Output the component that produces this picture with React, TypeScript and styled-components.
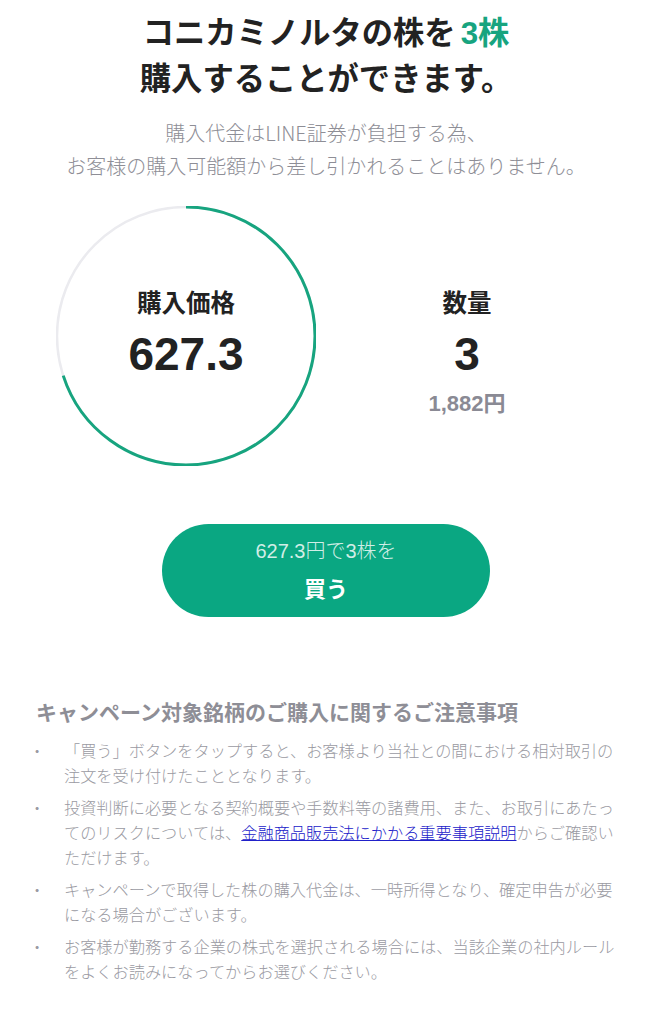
import React from 'react'
import styled, { createGlobalStyle } from 'styled-components'

const GlobalStyle = createGlobalStyle`
  * { box-sizing: border-box; }
  body {
    margin: 0;
    background: #ffffff;
    font-family: "Liberation Sans", "Noto Sans CJK JP", sans-serif;
    color: #222222;
  }
`

const colors = {
  text: '#222222',
  gray: '#8e8e96',
  lightGray: '#9a9aa2',
  green: '#17a47f',
  button: '#0aa782',
  track: '#ebebef',
  link: '#2121c9',
}

const Page = styled.div`
  width: 652px;
  padding: 11px 0 40px;
`

const Title = styled.h1`
  margin: 0;
  text-align: center;
  font-size: 31.3px;
  line-height: 46px;
  font-weight: 700;
  color: ${colors.text};
`

const Accent = styled.span`
  color: ${colors.green};
  margin-left: 5px;
`

const Lead = styled.p`
  margin: 13px 0 0;
  text-align: center;
  font-size: 20px;
  line-height: 33px;
  color: ${colors.gray};
  font-family: "Noto Sans CJK JP", sans-serif;
  font-weight: 300;
`

const StatsRow = styled.div`
  display: flex;
  align-items: flex-start;
  margin-top: 24px;
  padding-left: 56px;
`

const Ring = styled.div`
  position: relative;
  width: 260px;
  height: 260px;
  display: flex;
  flex-direction: column;
  align-items: center;
  padding-top: 82px;
`

const RingSvg = styled.svg`
  position: absolute;
  inset: 0;
`

const StatColumn = styled.div`
  width: 120px;
  margin-left: 91px;
  display: flex;
  flex-direction: column;
  align-items: center;
  padding-top: 82px;
`

const StatLabel = styled.div`
  position: relative;
  font-size: 24.5px;
  line-height: 32px;
  font-weight: 700;
  color: ${colors.text};
`

const StatValue = styled.div`
  position: relative;
  margin-top: 6px;
  font-size: 46px;
  line-height: 56px;
  font-weight: 700;
  color: ${colors.text};
`

const StatSub = styled.div`
  margin-top: 8px;
  font-size: 22px;
  line-height: 28px;
  font-weight: 700;
  color: #8a8a94;
`

const BuyButton = styled.button`
  display: flex;
  flex-direction: column;
  align-items: center;
  justify-content: center;
  width: 328px;
  height: 93px;
  margin: 58px auto 0;
  border: none;
  border-radius: 47px;
  background: ${colors.button};
  color: #ffffff;
  font-family: "Liberation Sans", "Noto Sans CJK JP", sans-serif;
  cursor: pointer;
`

const ButtonSub = styled.span`
  font-size: 20px;
  line-height: 30px;
  font-weight: 300;
  color: rgba(255, 255, 255, 0.82);
`

const ButtonMain = styled.span`
  margin-top: 8px;
  font-size: 22px;
  line-height: 32px;
  font-weight: 700;
`

const Notes = styled.section`
  margin-top: 81px;
  padding: 0 30px 0 36px;
`

const NotesTitle = styled.h2`
  margin: 0;
  font-size: 21px;
  line-height: 30px;
  font-weight: 700;
  color: ${colors.gray};
`

const NoteList = styled.ul`
  list-style: none;
  margin: 10px 0 0;
  padding: 0;
  display: flex;
  flex-direction: column;
  gap: 7px;
`

const NoteItem = styled.li`
  display: grid;
  grid-template-columns: 28px 1fr;
  font-family: "Noto Sans CJK JP", sans-serif;
  font-size: 16.2px;
  line-height: 25px;
  font-weight: 300;
  color: ${colors.lightGray};
`

const Bullet = styled.span`
  margin-left: -7px;
`

const NoteLink = styled.a`
  color: ${colors.link};
  text-decoration: underline;
`

const RADIUS = 129
const CIRC = 2 * Math.PI * RADIUS

const ProgressRing = ({ progress }: { progress: number }) => (
  <RingSvg width={260} height={260} viewBox="0 0 260 260">
    <circle cx={130} cy={130} r={RADIUS} fill="none" stroke={colors.track} strokeWidth={2.5} />
    <circle
      cx={130}
      cy={130}
      r={RADIUS}
      fill="none"
      stroke={colors.green}
      strokeWidth={3}
      strokeDasharray={`${CIRC * progress} ${CIRC}`}
      transform="rotate(-90 130 130)"
    />
  </RingSvg>
)

const notes: React.ReactNode[] = [
  '「買う」ボタンをタップすると、お客様より当社との間における相対取引の注文を受け付けたこととなります。',
  <>
    投資判断に必要となる契約概要や手数料等の諸費用、また、お取引にあたってのリスクについては、
    <NoteLink href="#">金融商品販売法にかかる重要事項説明</NoteLink>
    からご確認いただけます。
  </>,
  'キャンペーンで取得した株の購入代金は、一時所得となり、確定申告が必要になる場合がございます。',
  'お客様が勤務する企業の株式を選択される場合には、当該企業の社内ルールをよくお読みになってからお選びください。',
]

const App = () => {
  const price = 627.3
  const qty = 3

  return (
    <Page>
      <GlobalStyle />
      <Title>
        コニカミノルタの株を<Accent>{qty}株</Accent>
        <br />
        購入することができます。
      </Title>
      <Lead>
        購入代金はLINE証券が負担する為、
        <br />
        お客様の購入可能額から差し引かれることはありません。
      </Lead>

      <StatsRow>
        <Ring>
          <ProgressRing progress={0.7} />
          <StatLabel>購入価格</StatLabel>
          <StatValue>{price}</StatValue>
        </Ring>
        <StatColumn>
          <StatLabel>数量</StatLabel>
          <StatValue>{qty}</StatValue>
          <StatSub>1,882円</StatSub>
        </StatColumn>
      </StatsRow>

      <BuyButton>
        <ButtonSub>{price}円で{qty}株を</ButtonSub>
        <ButtonMain>買う</ButtonMain>
      </BuyButton>

      <Notes>
        <NotesTitle>キャンペーン対象銘柄のご購入に関するご注意事項</NotesTitle>
        <NoteList>
          {notes.map((n, i) => (
            <NoteItem key={i}>
              <Bullet>・</Bullet>
              <span>{n}</span>
            </NoteItem>
          ))}
        </NoteList>
      </Notes>
    </Page>
  )
}

export default App
